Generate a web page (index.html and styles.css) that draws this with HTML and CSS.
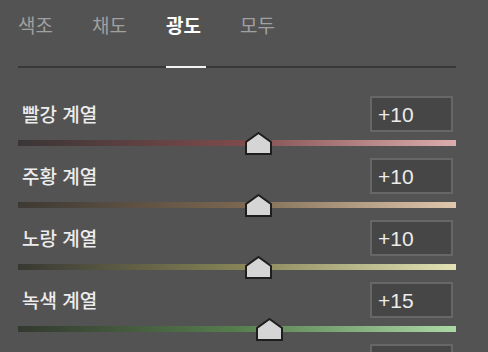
FILE: index.html
```html
<!DOCTYPE html>
<html lang="ko">
<head>
    <meta charset="UTF-8">
    <meta name="viewport" content="width=device-width, initial-scale=1.0">
    <title>HSL 광도</title>
    <link rel="stylesheet" href="styles.css">
</head>
<body>
    <div class="panel">
        <div class="tabs">
            <div class="tab">색조</div>
            <div class="tab">채도</div>
            <div class="tab active">광도</div>
            <div class="tab">모두</div>
        </div>
        <div class="sliders">
            <div class="row">
                <div class="row-head">
                    <span class="label">빨강 계열</span>
                    <div class="value">+10</div>
                </div>
                <div class="track red">
                    <svg class="thumb" style="left: 55%" viewBox="0 0 27 23"><polygon points="13.5,1 26,10 26,22 1,22 1,10"/></svg>
                </div>
            </div>
            <div class="row">
                <div class="row-head">
                    <span class="label">주황 계열</span>
                    <div class="value">+10</div>
                </div>
                <div class="track orange">
                    <svg class="thumb" style="left: 55%" viewBox="0 0 27 23"><polygon points="13.5,1 26,10 26,22 1,22 1,10"/></svg>
                </div>
            </div>
            <div class="row">
                <div class="row-head">
                    <span class="label">노랑 계열</span>
                    <div class="value">+10</div>
                </div>
                <div class="track yellow">
                    <svg class="thumb" style="left: 55%" viewBox="0 0 27 23"><polygon points="13.5,1 26,10 26,22 1,22 1,10"/></svg>
                </div>
            </div>
            <div class="row">
                <div class="row-head">
                    <span class="label">녹색 계열</span>
                    <div class="value">+15</div>
                </div>
                <div class="track green">
                    <svg class="thumb" style="left: 57.5%" viewBox="0 0 27 23"><polygon points="13.5,1 26,10 26,22 1,22 1,10"/></svg>
                </div>
            </div>
            <div class="row">
                <div class="row-head">
                    <span class="label">아쿠아 계열</span>
                    <div class="value">+5</div>
                </div>
                <div class="track aqua">
                    <svg class="thumb" style="left: 52.5%" viewBox="0 0 27 23"><polygon points="13.5,1 26,10 26,22 1,22 1,10"/></svg>
                </div>
            </div>
        </div>
    </div>
</body>
</html>
```

FILE: styles.css
```css
:root {
    --background: #535353;
    --text: #ececec;
    --text-muted: #a0a0a0;
    --line: #383838;
    --field: #464646;
    --field-border: #676767;
    --font-family: "Noto Sans CJK KR", "Noto Sans", sans-serif;
}
body {
    margin: 0;
    background-color: var(--background);
    font-family: var(--font-family);
    color: var(--text);
    overflow: hidden;
}
.panel {
    width: 438px;
    padding-left: 18px;
}
.tabs {
    display: flex;
    gap: 34px;
    border-bottom: 2px solid var(--line);
    height: 66px;
}
.tab {
    width: 40px;
    font-size: 19px;
    line-height: 26px;
    padding-top: 12px;
    color: var(--text-muted);
    box-sizing: border-box;
    height: 68px;
    margin-bottom: -2px;
    border-bottom: 2px solid transparent;
}
.tab.active {
    color: #ffffff;
    font-weight: 700;
    border-bottom-color: #f2f2f2;
}
.sliders {
    padding-top: 28px;
}
.row {
    height: 62px;
}
.row-head {
    display: flex;
    justify-content: space-between;
    align-items: center;
    height: 36px;
    padding-left: 4px;
    padding-right: 3px;
}
.label {
    font-size: 19px;
    font-weight: 500;
    line-height: 1;
    margin-top: -2px;
}
.value {
    width: 73px;
    height: 32px;
    border: 2px solid var(--field-border);
    background-color: var(--field);
    font-family: "Liberation Sans", sans-serif;
    font-size: 21px;
    line-height: 34px;
    padding-left: 6px;
}
.track {
    position: relative;
    height: 6px;
    margin-top: 8px;
}
.track.red {
    background: linear-gradient(to right, #3a3536, #7d4a4b 50%, #ddadad);
}
.track.orange {
    background: linear-gradient(to right, #3d3934, #7a6650 50%, #e0c8ae);
}
.track.yellow {
    background: linear-gradient(to right, #383833, #858356 50%, #e2e2b4);
}
.track.green {
    background: linear-gradient(to right, #33392f, #567d4e 50%, #acd8a6);
}
.track.aqua {
    background: linear-gradient(to right, #323a3a, #4e7a7c 50%, #a6d6d8);
}
.thumb {
    position: absolute;
    top: -8px;
    width: 27px;
    height: 23px;
    margin-left: -13.5px;
}
.thumb polygon {
    fill: #d5d5d5;
    stroke: #1e1e1e;
    stroke-width: 2;
    stroke-linejoin: miter;
}
```
